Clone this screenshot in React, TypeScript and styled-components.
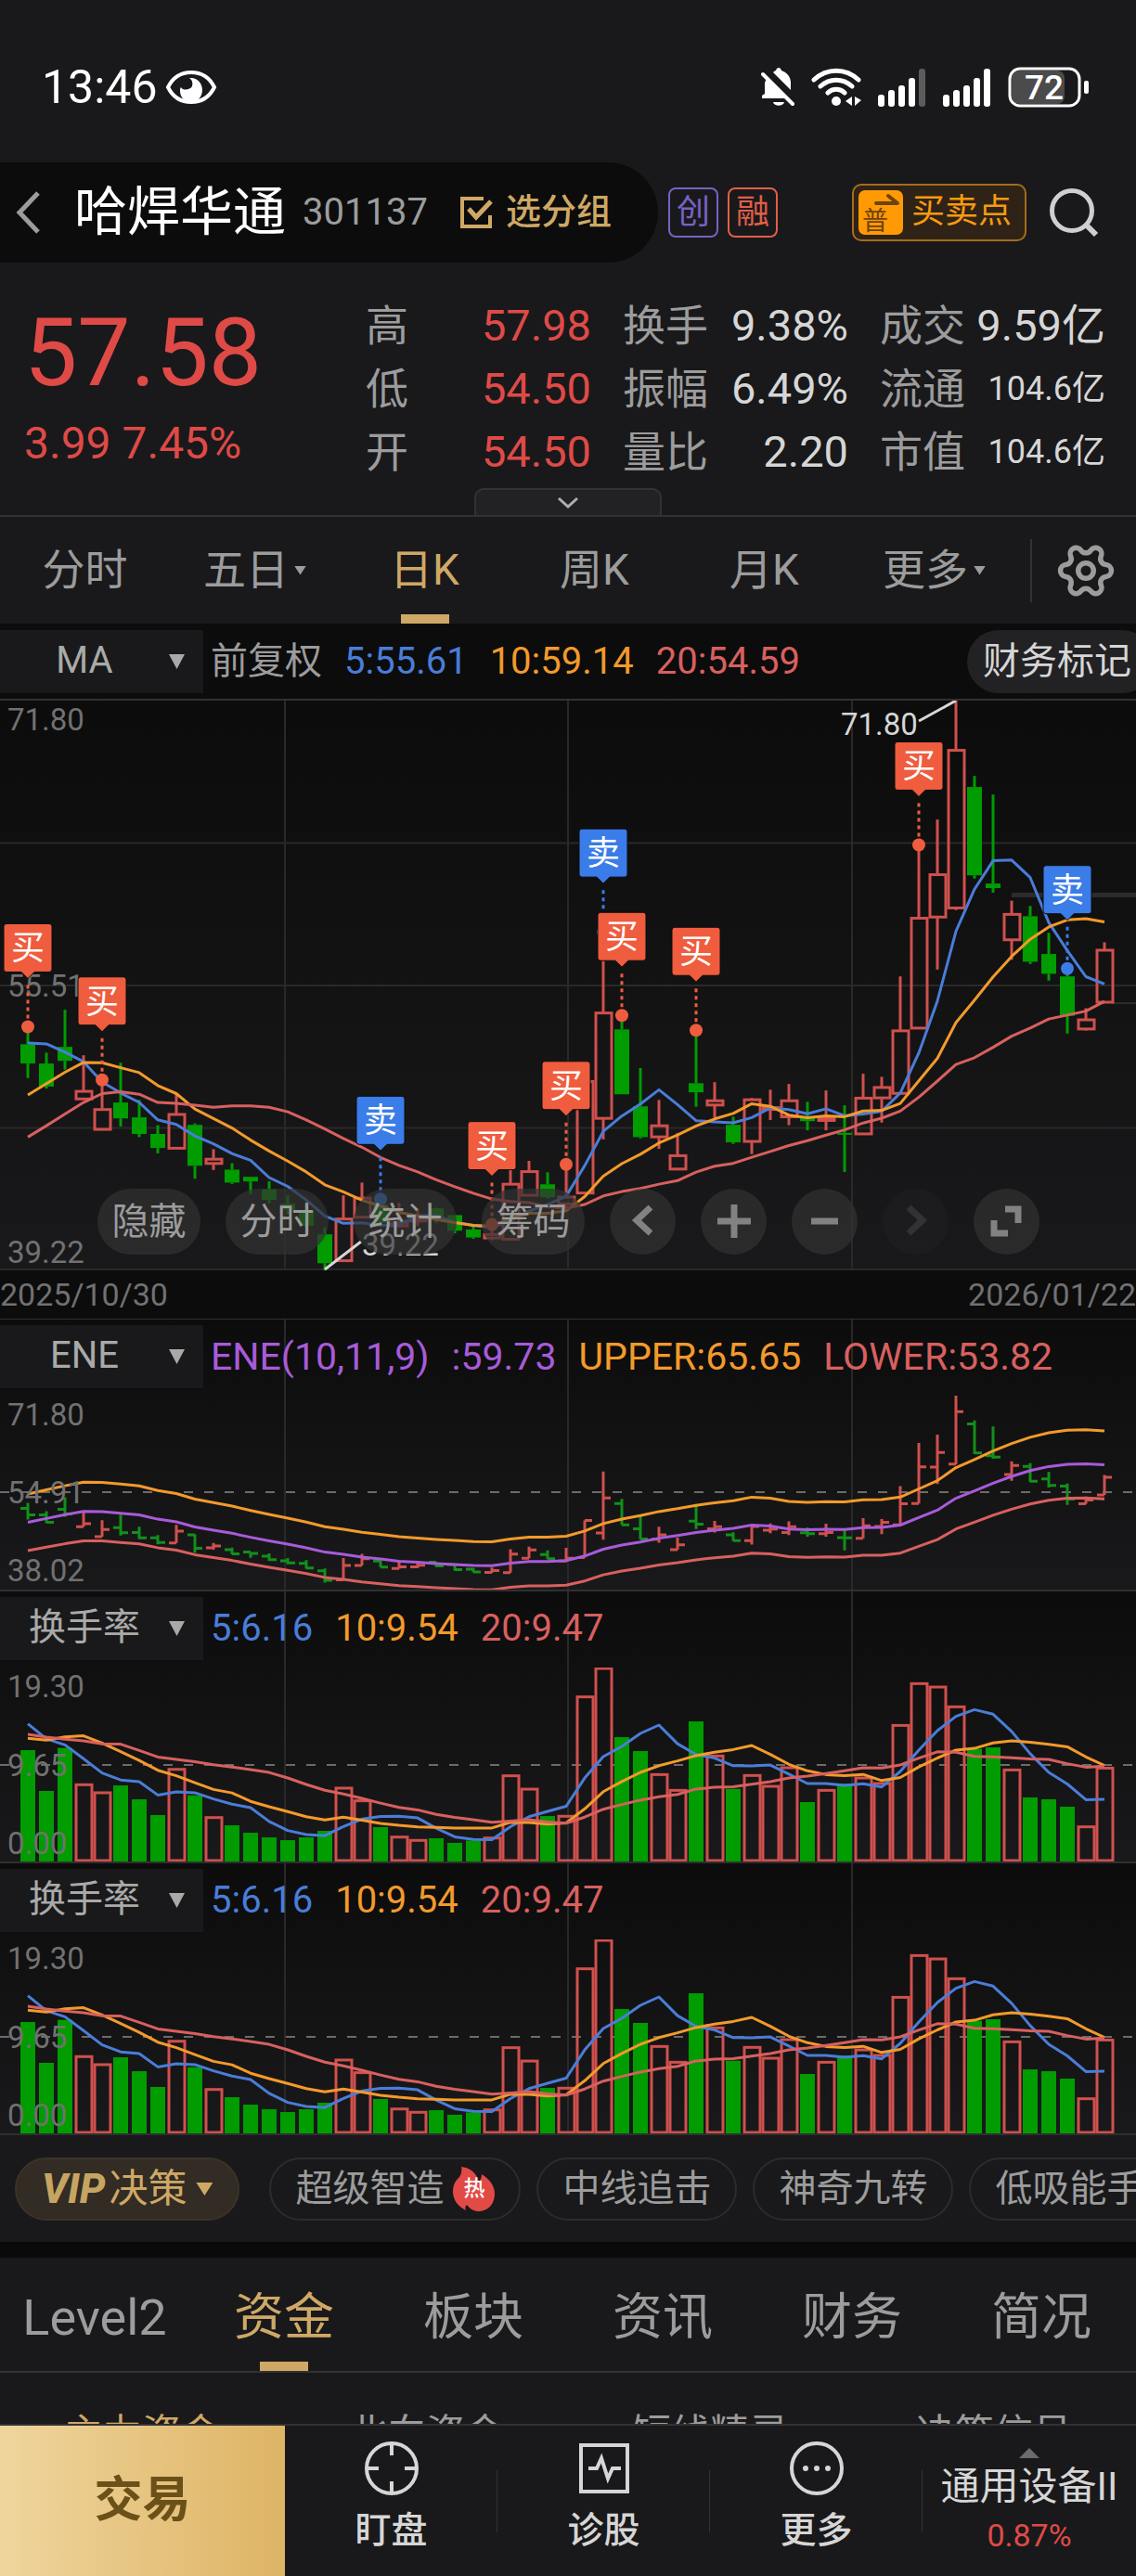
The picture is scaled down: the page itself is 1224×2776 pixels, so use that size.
import React from "react";
import styled, { createGlobalStyle, css } from "styled-components";
import { Settings } from "lucide-react";

const c = {
  page: "#19191b",
  ink: "#0c0c0c",
  line: "#323234",
  grid: "#29292a",
  gold: "#cfa866",
  red: "#df4a47",
  candle: "#d0504d",
  green: "#009c00",
  blue: "#4a7dd8",
  orange: "#f39a2b",
  rose: "#d8605f",
  purple: "#a85bd9",
  grey: "#9c9c9c",
  dim: "#717172",
  light: "#d6d6d6",
  buy: "#ef5c3e",
  sell: "#3a7ce8",
};

const font = `Roboto, "Noto Sans CJK SC", sans-serif`;

const Global = createGlobalStyle`
  * { box-sizing: border-box; }
  body { margin: 0; background: ${c.page}; color: ${c.light}; font-family: ${font}; line-height: 1.2; }
  button, select { font: inherit; color: inherit; background: none; border: 0; padding: 0; margin: 0; }
  dl, dd, h1, p { margin: 0; font-weight: 400; }
  a { color: inherit; text-decoration: none; }
  svg { display: block; flex: none; }
`;

/* ---------- data ---------- */

type Candle = [open: number, close: number, low: number, high: number];

const candles: Candle[] = [
  [52.15, 51.05, 50.22, 53.15], [51.05, 49.73, 49.62, 51.67], [52.0, 51.2, 50.7, 54.12],
  [48.97, 49.51, 48.97, 51.52], [47.23, 48.47, 47.23, 50.11], [48.82, 47.91, 47.45, 51.09],
  [47.97, 47.02, 46.84, 48.97], [47.02, 46.22, 45.91, 47.52], [46.15, 48.19, 46.15, 49.31],
  [47.54, 45.2, 44.46, 47.62], [45.28, 45.63, 44.96, 46.15], [44.98, 44.24, 44.16, 45.35],
  [44.57, 44.31, 43.57, 44.57], [43.85, 43.25, 43.05, 44.31], [43.03, 42.68, 42.42, 43.51],
  [42.6, 41.77, 41.67, 43.14], [41.28, 39.63, 39.22, 41.69], [39.72, 42.21, 39.72, 43.51],
  [42.21, 43.4, 42.21, 44.24], [42.97, 41.95, 41.88, 43.29], [41.71, 41.99, 41.67, 43.07],
  [41.99, 42.25, 41.77, 42.75], [42.77, 42.16, 41.93, 42.81], [42.38, 41.49, 41.34, 42.38],
  [41.56, 41.1, 41.02, 41.77], [41.02, 41.32, 40.93, 41.84], [40.95, 44.2, 40.95, 45.07],
  [43.46, 44.92, 43.46, 45.48], [44.14, 43.4, 43.31, 44.83], [42.97, 43.46, 42.81, 45.28],
  [43.59, 50.07, 43.59, 50.07], [47.86, 53.99, 46.71, 58.58], [53.0, 49.29, 49.29, 53.8],
  [48.6, 46.84, 46.76, 50.79], [46.8, 47.54, 46.17, 48.97], [44.96, 45.83, 44.96, 47.08],
  [49.92, 49.4, 48.58, 52.95], [48.62, 48.97, 47.95, 49.98], [47.54, 46.54, 46.45, 48.01],
  [46.54, 49.03, 45.87, 49.08], [48.38, 48.58, 47.82, 49.55], [47.95, 48.97, 47.52, 49.88],
  [47.93, 47.75, 47.23, 48.86], [47.77, 47.95, 47.23, 49.51], [47.08, 47.04, 44.85, 48.66],
  [46.97, 49.12, 46.97, 50.46], [49.03, 49.73, 47.67, 50.29], [49.29, 52.97, 49.25, 56.03],
  [53.02, 59.41, 53.02, 63.55], [59.37, 61.9, 56.42, 65.0], [59.89, 69.01, 59.82, 71.8],
  [66.86, 61.81, 61.62, 67.49], [61.34, 61.08, 60.82, 66.43], [58.07, 59.63, 56.98, 60.36],
  [59.47, 56.87, 56.74, 60.06], [57.31, 56.18, 55.79, 58.52], [56.03, 53.78, 52.76, 56.48],
  [52.97, 53.6, 52.93, 54.21], [54.5, 57.58, 54.5, 57.98],
];

const turnover = [
  11.08, 7.02, 11.3, 7.73, 6.93, 7.57, 6.19, 4.62, 9.26, 6.59, 4.46, 3.6, 2.86, 2.4, 2.12, 2.4, 3.05,
  7.39, 6.13, 3.42, 2.52, 2.19, 2.31, 1.85, 2.09, 2.43, 8.62, 7.29, 4.52, 4.59, 16.47, 19.3, 12.37,
  10.99, 8.74, 7.17, 13.94, 10.59, 7.23, 8.65, 7.57, 9.42, 5.91, 7.17, 7.73, 8.4, 7.85, 13.63, 17.79,
  17.45, 15.48, 11.2, 11.36, 9.2, 6.37, 6.19, 5.45, 3.54, 9.38,
];

// Averages for the first days, whose window starts before the visible range.
const priceLead = {
  5: [52.22, 52.17, 51.7, 51.15],
  10: [49.25, 49.9, 50.55, 51.11, 51.09, 50.81, 50.53, 49.79, 49.33],
  20: [46.84, 47.49, 48.16, 48.82, 49.33, 49.44, 49.29, 48.82, 48.77, 48.66, 48.55, 48.62, 48.62, 48.55, 48.29, 47.82, 47.3, 46.76, 46.26],
};
const turnoverLead = {
  5: [13.7, 12.2, 11.6, 10.22],
  10: [12.25, 12.07, 12.4, 12.5, 11.79, 10.93, 10.06, 9.08, 8.53],
  20: [12.65, 12.37, 12.16, 12.0, 11.7, 11.67, 11.05, 10.4, 10.16, 9.94, 9.63, 9.39, 9.14, 8.86, 8.31, 7.66, 7.08, 6.71, 6.28],
};

const average = (values: number[], n: number, lead: number[]) =>
  values.map((_, i) =>
    i < n - 1 ? lead[i] : values.slice(i - n + 1, i + 1).reduce((a, b) => a + b, 0) / n
  );

const closes = candles.map((k) => k[1]);
const ma5 = average(closes, 5, priceLead[5]);
const ma10 = average(closes, 10, priceLead[10]);
const ma20 = average(closes, 20, priceLead[20]);
const to5 = average(turnover, 5, turnoverLead[5]);
const to10 = average(turnover, 10, turnoverLead[10]);
const to20 = average(turnover, 20, turnoverLead[20]);

const trades: { day: number; kind: "buy" | "sell" }[] = [
  { day: 0, kind: "buy" }, { day: 4, kind: "buy" }, { day: 19, kind: "sell" },
  { day: 25, kind: "buy" }, { day: 29, kind: "buy" }, { day: 31, kind: "sell" },
  { day: 32, kind: "buy" }, { day: 36, kind: "buy" }, { day: 48, kind: "buy" },
  { day: 56, kind: "sell" },
];

/* ---------- chart parts ---------- */

const W = 1224;
const dayX = (i: number) => 30 + i * 20;
const isUp = (k: Candle) => k[1] >= k[0];

const Plot = styled.svg`
  width: 100%;
  height: auto;
  overflow: hidden;
  font-family: ${font};
`;

function Line({ values, y, color }: { values: number[]; y: (v: number) => number; color: string }) {
  return (
    <polyline
      points={values.map((v, i) => `${dayX(i)},${y(v).toFixed(1)}`).join(" ")}
      fill="none"
      stroke={color}
      strokeWidth={3}
      strokeLinejoin="round"
    />
  );
}

function AxisLabels({ labels, at }: { labels: string[]; at: number[] }) {
  return (
    <g fill={c.dim} fontSize={33}>
      {labels.map((t, i) => (
        <text key={t} x={8} y={at[i] + 11}>{t}</text>
      ))}
    </g>
  );
}

function Trade({ x, y, kind }: { x: number; y: number; kind: "buy" | "sell" }) {
  const color = kind === "buy" ? c.buy : c.sell;
  const top = y - 111;
  return (
    <g>
      <line x1={x} x2={x} y1={top + 66} y2={y - 8} stroke={color} strokeWidth={3} strokeDasharray="4 4" />
      <circle cx={x} cy={y} r={7} fill={color} />
      <path
        d={`M${x - 23} ${top}h46q3 0 3 3v46q0 3 -3 3h-16l-7 7l-7 -7h-16q-3 0 -3 -3v-46q0 -3 3 -3z`}
        fill={color}
        stroke="#0c0c0c"
        strokeWidth={1}
      />
      <text x={x} y={top + 39} fontSize={36} fill="#fff" textAnchor="middle">
        {kind === "buy" ? "买" : "卖"}
      </text>
    </g>
  );
}

function PriceChart() {
  const H = 614;
  const y = (p: number) => ((71.8 - p) / (71.8 - 39.22)) * H;
  return (
    <Plot viewBox={`0 0 ${W} ${H}`} role="img" aria-label="日K线">
      <g stroke={c.grid} strokeWidth={2}>
        {[1, 2, 3].map((n) => (
          <line key={n} x1={0} x2={W} y1={(H / 4) * n} y2={(H / 4) * n} />
        ))}
        <line x1={0} x2={W} y1={H - 1} y2={H - 1} />
      </g>
      <line x1={1090} x2={W} y1={y(60.69)} y2={y(60.69)} stroke="#2b2b2c" strokeWidth={5} />
      <line x1={1198} x2={W} y1={y(54.5)} y2={y(54.5)} stroke="#2b2b2c" strokeWidth={2} />
      {candles.map((k, i) => {
        const [open, close, low, high] = k;
        const x = dayX(i);
        const up = isUp(k);
        const color = up ? c.candle : c.green;
        const top = y(Math.max(open, close));
        const bottom = y(Math.min(open, close));
        return (
          <g key={i} stroke={color}>
            <line x1={x} x2={x} y1={y(high)} y2={top} strokeWidth={3} />
            <line x1={x} x2={x} y1={bottom} y2={y(low)} strokeWidth={3} />
            {up ? (
              <rect x={x - 8} y={top + 1} width={17} height={Math.max(bottom - top - 2, 2)} fill="none" strokeWidth={3} />
            ) : (
              <rect x={x - 8} y={top} width={16} height={Math.max(bottom - top, 2)} fill={color} stroke="none" />
            )}
          </g>
        );
      })}
      <Line values={ma5} y={y} color={c.blue} />
      <Line values={ma10} y={y} color={c.orange} />
      <Line values={ma20} y={y} color={c.rose} />
      <AxisLabels labels={["71.80", "55.51", "39.22"]} at={[21, 308, 595]} />
      {trades.map((t) => (
        <Trade key={t.day} x={dayX(t.day)} y={y(candles[t.day][3])} kind={t.kind} />
      ))}
      <g stroke={c.light} strokeWidth={3}>
        <line x1={990} y1={22} x2={1030} y2={0} />
        <line x1={350} y1={613} x2={389} y2={583} />
      </g>
      <g fill={c.light} fontSize={33}>
        <text x={906} y={37}>71.80</text>
        <text x={390} y={598}>39.22</text>
      </g>
    </Plot>
  );
}

const SUB_H = 209;

function EneChart() {
  const y = (p: number) => ((71.8 - p) / (71.8 - 38.02)) * SUB_H;
  return (
    <Plot viewBox={`0 0 ${W} ${SUB_H}`} role="img" aria-label="ENE">
      <line x1={0} x2={W} y1={104} y2={104} stroke="#6b6b6b" strokeWidth={2} strokeDasharray="10 12" />
      {candles.map((k, i) => {
        const x = dayX(i);
        return (
          <path
            key={i}
            d={`M${x} ${y(k[3])}V${y(k[2])}M${x - 8} ${y(k[0])}H${x}M${x} ${y(k[1])}H${x + 8}`}
            stroke={isUp(k) ? c.candle : "#12901a"}
            strokeWidth={3}
            fill="none"
          />
        );
      })}
      <Line values={ma10.map((v) => v * 1.11)} y={y} color={c.orange} />
      <Line values={ma10.map((v) => v * 1.01)} y={y} color={c.purple} />
      <Line values={ma10.map((v) => v * 0.91)} y={y} color={c.rose} />
      <AxisLabels labels={["71.80", "54.91", "38.02"]} at={[21, 105, 189]} />
    </Plot>
  );
}

function TurnoverChart() {
  const y = (v: number) => SUB_H - (v / 19.3) * SUB_H;
  return (
    <Plot viewBox={`0 0 ${W} ${SUB_H}`} role="img" aria-label="换手率">
      <line x1={0} x2={W} y1={105} y2={105} stroke="#6b6b6b" strokeWidth={2} strokeDasharray="10 12" />
      {turnover.map((v, i) => {
        const x = dayX(i);
        return isUp(candles[i]) ? (
          <rect key={i} x={x - 8} y={y(v) + 1} width={17} height={SUB_H - y(v) - 2} fill="none" stroke={c.candle} strokeWidth={3} />
        ) : (
          <rect key={i} x={x - 8} y={y(v)} width={16} height={SUB_H - y(v)} fill={c.green} />
        );
      })}
      <Line values={to5} y={y} color={c.blue} />
      <Line values={to10} y={y} color={c.orange} />
      <Line values={to20} y={y} color={c.rose} />
      <AxisLabels labels={["19.30", "9.65", "0.00"]} at={[21, 106, 190]} />
    </Plot>
  );
}

/* ---------- layout ---------- */

const Page = styled.div`
  display: flex;
  flex-direction: column;
  height: 100vh;
  overflow: hidden;
  background: ${c.page};
`;

const Scroll = styled.main`
  flex: 1;
  min-height: 0;
  overflow: hidden;
`;

const StatusBar = styled.div`
  display: flex;
  align-items: center;
  height: 175px;
  padding: 12px 50px 0 45px;
  color: #fff;
  font-size: 50px;
  gap: 8px;
`;

const StatusIcons = styled.div`
  display: flex;
  align-items: center;
  gap: 18px;
  margin-left: auto;
`;

const Header = styled.header`
  display: flex;
  align-items: center;
  height: 108px;
  padding-right: 40px;
`;

const TitlePill = styled.div`
  display: flex;
  align-items: center;
  height: 108px;
  padding: 0 50px 0 16px;
  background: ${c.ink};
  border-radius: 0 54px 54px 0;
`;

const StockName = styled.h1`
  margin-left: 36px;
  font-size: 57px;
  color: #fff;
`;

const StockCode = styled.span`
  margin-left: 18px;
  font-size: 40px;
  color: ${c.grey};
`;

const GroupButton = styled.button`
  display: flex;
  align-items: center;
  gap: 14px;
  margin-left: 34px;
  font-size: 38px;
  font-weight: 500;
  color: ${c.gold};
`;

const Tags = styled.div`
  display: flex;
  gap: 10px;
  margin-left: 11px;
`;

const Tag = styled.span<{ $color: string }>`
  display: grid;
  place-items: center;
  width: 54px;
  height: 54px;
  border: 2px solid ${(p) => p.$color};
  border-radius: 8px;
  font-size: 36px;
  line-height: 44px;
  color: ${(p) => p.$color};
`;

const HeaderActions = styled.div`
  display: flex;
  align-items: center;
  gap: 24px;
  margin-left: auto;
`;

const TradePointButton = styled.button`
  display: flex;
  align-items: center;
  gap: 9px;
  height: 62px;
  padding: 0 14px 0 5px;
  border: 2px solid #a56c1c;
  border-radius: 10px;
  background: #2f2317;
  font-size: 36px;
  color: #f79a10;
`;

const IconButton = styled.button`
  display: grid;
  place-items: center;
`;

const Quote = styled.section`
  display: flex;
  padding: 34px 33px 5px 0;
`;

const PriceBlock = styled.div`
  flex: 0 0 394px;
  padding: 11px 0 0 26px;
  color: ${c.red};
`;

const Price = styled.p`
  font-size: 102px;
  line-height: 104px;
`;

const Change = styled.p`
  margin-top: 18px;
  font-size: 48px;
  line-height: 56px;
`;

const Stats = styled.dl`
  flex: 1;
  display: grid;
  grid-template-columns: repeat(3, 1fr);
  column-gap: 34px;
`;

const Stat = styled.div`
  display: flex;
  justify-content: space-between;
  align-items: center;
  height: 68px;
  font-size: 46px;
  line-height: 68px;
`;

const StatLabel = styled.dt`
  color: ${c.grey};
`;

const StatValue = styled.dd<{ $up?: boolean; $small?: boolean }>`
  color: ${(p) => (p.$up ? c.red : c.light)};
  font-size: ${(p) => (p.$small ? 36 : 47)}px;
  white-space: nowrap;
`;

const HandleRow = styled.div`
  display: flex;
  justify-content: center;
  border-bottom: 2px solid ${c.line};
`;

const Handle = styled.button`
  display: grid;
  place-items: center;
  width: 202px;
  height: 29px;
  border: 2px solid ${c.line};
  border-bottom: 0;
  border-radius: 10px 10px 0 0;
  background: #222224;
`;

const PeriodBar = styled.nav`
  display: flex;
  align-items: center;
  height: 115px;
`;

const PeriodTabs = styled.div`
  flex: 1;
  display: grid;
  grid-template-columns: repeat(6, 1fr);
  align-self: stretch;
  padding-right: 12px;
`;

const tab = css<{ $active?: boolean }>`
  position: relative;
  display: flex;
  align-items: center;
  justify-content: center;
  gap: 6px;
  white-space: nowrap;
  color: ${(p) => (p.$active ? c.gold : c.grey)};
  &::after {
    content: "";
    position: absolute;
    bottom: 0;
    left: 50%;
    width: 52px;
    height: 10px;
    margin-left: -26px;
    background: ${(p) => (p.$active ? c.gold : "none")};
  }
`;

const PeriodTab = styled.button<{ $active?: boolean }>`
  ${tab}
  font-size: 46px;
`;

const GearButton = styled.button`
  display: grid;
  place-items: center;
  width: 114px;
  height: 68px;
  padding-left: 4px;
  border-left: 2px solid ${c.line};
  color: ${c.grey};
`;

const Gear = styled(Settings)`
  transform: rotate(90deg);
`;

const Caret = styled.span<{ $w: number; $h: number; $up?: boolean }>`
  width: ${(p) => p.$w}px;
  height: ${(p) => p.$h}px;
  background: currentColor;
  clip-path: ${(p) => (p.$up ? "polygon(50% 0, 100% 100%, 0 100%)" : "polygon(0 0, 100% 0, 50% 100%)")};
`;

const IndicatorBar = styled.div`
  display: flex;
  align-items: center;
  padding: 6px 0 8px;
  font-size: 40px;
  white-space: nowrap;
`;

const MainIndicatorBar = styled(IndicatorBar)`
  padding: 7px 0 6px;
  background: ${c.ink};
  border-bottom: 2px solid ${c.line};
  overflow: hidden;
`;

const Picker = styled.label`
  display: grid;
  align-items: center;
  flex: none;
  width: 219px;
  height: 68px;
  background: ${c.page};
  color: #a8aaa8;
  > * { grid-area: 1 / 1; }
  > span { justify-self: end; margin-right: 20px; pointer-events: none; }
`;

const PickerSelect = styled.select`
  appearance: none;
  width: 100%;
  height: 66px;
  align-self: start;
  padding-right: 37px;
  text-align: center;
  text-align-last: center;
  outline: 0;
`;

const Readings = styled.div<{ $size?: number }>`
  display: flex;
  align-items: baseline;
  gap: 24px;
  margin-left: 8px;
  font-size: ${(p) => p.$size ?? 40}px;
  line-height: 48px;
`;

const Reading = styled.span<{ $color: string }>`
  color: ${(p) => p.$color};
`;

const MarkButton = styled.button`
  flex: none;
  height: 68px;
  margin-left: auto;
  margin-right: -19px;
  padding: 0 24px 0 17px;
  border-radius: 34px;
  background: #222224;
  color: ${c.light};
`;

const gridded = css`
  background:
    linear-gradient(${c.grid}, ${c.grid}) 25% 0 / 2px 100% no-repeat,
    linear-gradient(${c.grid}, ${c.grid}) 50% 0 / 2px 100% no-repeat,
    linear-gradient(${c.grid}, ${c.grid}) 75% 0 / 2px 100% no-repeat,
    linear-gradient(${c.ink}, ${c.page});
`;

const PricePanel = styled.section`
  position: relative;
  ${gridded}
`;

const SubPanel = styled.section`
  border-bottom: 2px solid #2f2f30;
  ${gridded}
`;

const ChartTools = styled.div`
  position: absolute;
  left: 105px;
  bottom: 17px;
  display: flex;
  gap: 27px;
`;

const ToolButton = styled.button<{ $round?: boolean }>`
  display: grid;
  place-items: center;
  width: ${(p) => (p.$round ? 71 : 111)}px;
  height: 71px;
  border-radius: 36px;
  background: rgba(50, 50, 50, 0.7);
  font-size: 40px;
  color: ${c.grey};
  white-space: nowrap;
  &:disabled { opacity: 0.25; }
`;

const DateRow = styled.div`
  display: flex;
  justify-content: space-between;
  align-items: center;
  height: 53px;
  border-bottom: 1px solid ${c.line};
  background: ${c.ink};
  font-size: 34px;
  color: ${c.dim};
`;

const ChipRow = styled.div`
  display: flex;
  gap: 17px;
  padding: 24px 0 23px 16px;
  overflow: hidden;
`;

const Chip = styled.button`
  flex: none;
  display: flex;
  align-items: center;
  gap: 10px;
  height: 68px;
  padding: 0 26px;
  border: 2px solid #2c2c2e;
  border-radius: 34px;
  font-size: 40px;
  color: ${c.grey};
  white-space: nowrap;
`;

const VipChip = styled(Chip)`
  gap: 4px;
  margin-right: 15px;
  padding: 0 27px;
  font-size: 42px;
  background: #322c24;
  border-color: #3b3327;
  color: ${c.gold};
  > span { margin-left: 6px; }
`;

const VipMark = styled.b`
  font-size: 44px;
  font-weight: 800;
  font-style: italic;
  color: #c6a563;
`;

const Divider = styled.div`
  height: 17px;
  background: #0a0a0a;
`;

const SectionTabs = styled.nav`
  display: grid;
  grid-template-columns: repeat(6, 1fr);
  height: 124px;
  border-bottom: 2px solid ${c.line};
`;

const SectionTab = styled.a<{ $active?: boolean }>`
  ${tab}
  font-size: 54px;
  padding-top: 8px;
`;

const SubTabs = styled.nav`
  display: grid;
  grid-template-columns: repeat(4, 1fr);
  text-align: center;
  font-size: 42px;
  line-height: 132px;
`;

const SubTab = styled.a<{ $active?: boolean }>`
  color: ${(p) => (p.$active ? c.gold : c.grey)};
`;

const BottomBar = styled.nav`
  flex: none;
  display: grid;
  grid-template-columns: 307fr 229fr 229fr 229fr 230fr;
  height: 164px;
  border-top: 2px solid ${c.line};
  background: ${c.page};
`;

const TradeButton = styled.button`
  background: linear-gradient(90deg, #efd59d, #deb465);
  color: #6b5019;
  font-size: 52px;
  font-weight: 700;
`;

const divided = css`
  background: linear-gradient(${c.line}, ${c.line}) right 48px / 1px 67px no-repeat;
`;

const BottomItem = styled.button`
  display: flex;
  flex-direction: column;
  align-items: center;
  gap: 10px;
  padding-top: 16px;
  font-size: 39px;
  line-height: 54px;
  font-weight: 500;
  ${divided}
`;

const SectorItem = styled.button`
  display: flex;
  flex-direction: column;
  align-items: center;
  padding-top: 24px;
  font-size: 42px;
  line-height: 62px;
  white-space: nowrap;
  > span { color: #6b6b6b; }
`;

const SectorChange = styled.small`
  font-size: 34px;
  line-height: 42px;
  color: ${c.red};
`;

const FlameBadge = styled.span`
  display: grid;
  place-items: center;
  > * { grid-area: 1 / 1; }
`;

const FlameText = styled.b`
  position: relative;
  font-size: 23px;
  line-height: 24px;
  font-weight: 500;
  color: #fff;
`;

/* ---------- icons ---------- */

const EyeIcon = () => (
  <svg width="56" height="38" viewBox="0 0 56 38" fill="none">
    <path d="M3 19C8 9 17 3 28 3s20 6 25 16C48 29 39 35 28 35S8 29 3 19z" stroke="#fff" strokeWidth="4" />
    <path d="M26 9c8-1 14 5 14 13 0 7-5 13-12 13s-12-5-12-12c0-2 0-3 1-4 2 4 10 3 12-1 1-4 0-7-3-9z" fill="#fff" />
  </svg>
);

const MutedBell = () => (
  <svg width="36" height="42" viewBox="0 0 36 42">
    <path d="M6 12L27 33H1v-3l3-2V17c0-2 1-3 2-5zM13 5c1-1 2-2 3-2 1-4 5-4 6 0 6 2 10 7 10 13v8z" fill="#fff" />
    <path d="M13 37h12c-1 5-11 5-12 0z" fill="#fff" />
    <path d="M2 7l32 32" stroke="#fff" strokeWidth="4" strokeLinecap="round" />
  </svg>
);

const WifiIcon = () => (
  <svg width="54" height="42" viewBox="0 0 54 42" fill="none" stroke="#fff" strokeWidth="5" strokeLinecap="round">
    <path d="M3 13c14-13 34-13 48 0M10 20c10-9 24-9 34 0M18 27c5-5 13-5 18 0" />
    <circle cx="27" cy="36" r="5" fill="#fff" stroke="none" />
    <path d="M44 31v10l-7-5zM47 31v10l7-6z" fill="#fff" stroke="none" />
  </svg>
);

const SignalIcon = ({ bars }: { bars: number }) => (
  <svg width="52" height="42" viewBox="0 0 52 42">
    {[13, 18, 23, 31, 41].map((h, i) => (
      <rect key={i} x={i * 11} y={42 - h} width="7" height={h} rx="3" fill={i < bars ? "#fff" : "#5c5c5d"} />
    ))}
  </svg>
);

const Battery = () => (
  <svg width="88" height="44" viewBox="0 0 88 44" fontFamily="Roboto">
    <rect x="4" y="4" width="57" height="36" rx="8" fill="#4b4b4c" />
    <rect x="2" y="2" width="75" height="40" rx="11" fill="none" stroke="#fff" strokeWidth="3" />
    <rect x="82" y="15" width="5" height="14" rx="2" fill="#fff" />
    <text x="39" y="35" fontSize="37" fontWeight="500" fill="#fff" textAnchor="middle">72</text>
  </svg>
);

const ChevronLeft = () => (
  <svg width="28" height="48" viewBox="0 0 28 48" fill="none" stroke={c.grey} strokeWidth="5">
    <path d="M25 3L5 24l20 21" />
  </svg>
);

const CheckBoxIcon = () => (
  <svg width="36" height="36" viewBox="0 0 36 36" fill="none" stroke={c.gold} strokeWidth="4">
    <path d="M26 3H3v30h30V21" />
    <path d="M10 14l8 9L34 6" strokeWidth="5" />
  </svg>
);

const AccountIcon = () => (
  <svg width="48" height="48" viewBox="0 0 48 48" fontFamily="Noto Sans CJK SC">
    <rect width="48" height="48" rx="7" fill="#ff9a05" />
    <path d="M19 14h23L32 6" fill="none" stroke="#6e420b" strokeWidth="4" strokeLinecap="round" strokeLinejoin="round" />
    <text x="4" y="43" fontSize="28" fill="#6e420b">普</text>
  </svg>
);

const SearchIcon = () => (
  <svg width="54" height="54" viewBox="0 0 54 54" fill="none" stroke="#cfcfcf" strokeWidth="5">
    <circle cx="25" cy="25" r="21.5" />
    <path d="M39 39l12 12" strokeWidth="6" />
  </svg>
);

const ChevronDown = () => (
  <svg width="24" height="14" viewBox="0 0 24 14" fill="none" stroke="#b0b0b0" strokeWidth="3">
    <path d="M2 2l10 9L22 2" />
  </svg>
);

const toolPaths: Record<string, string> = {
  prev: "M44 20L29 34l15 14",
  plus: "M36 17v36M18 35h36",
  minus: "M21 35h29",
  next: "M28 20l15 14-15 14",
  expand: "M34 22h14v15M22 34v14h15",
};

const ToolIcon = ({ name }: { name: string }) => (
  <svg width="71" height="71" viewBox="0 0 71 71" fill="none" stroke="#828282" strokeWidth="7">
    <path d={toolPaths[name]} />
  </svg>
);

const Flame = () => (
  <svg width="45" height="48" viewBox="0 0 45 48">
    <path
      d="M9 0c9 1 16 6 19 16 2-2 3-5 3-8 8 5 14 12 14 21 0 10-6 18-16 19-7 0-11-3-14-7-2 2-2 4-1 6C6 43 0 36 0 27 0 19 3 15 7 11c2-3 3-7 2-11z"
      fill="#e24a46"
    />
  </svg>
);

const WatchIcon = () => (
  <svg width="60" height="60" viewBox="0 0 60 60" fill="none" stroke={c.light} strokeWidth="4">
    <circle cx="30" cy="30" r="27" />
    <path d="M30 3v13M30 44v13M3 30h13M44 30h13" />
  </svg>
);

const DiagnoseIcon = () => (
  <svg width="60" height="60" viewBox="0 0 60 60" fill="none" stroke={c.light} strokeWidth="4">
    <rect x="5" y="5" width="50" height="50" />
    <path d="M13 30h9l5-11 7 22 5-11h9" />
  </svg>
);

const MoreIcon = () => (
  <svg width="60" height="60" viewBox="0 0 60 60" fill="none" stroke={c.light} strokeWidth="4">
    <circle cx="30" cy="30" r="27" />
    <g fill={c.light} stroke="none">
      <circle cx="18" cy="30" r="3" />
      <circle cx="30" cy="30" r="3" />
      <circle cx="42" cy="30" r="3" />
    </g>
  </svg>
);

/* ---------- page ---------- */

const stats: { label: string; value: string; up?: boolean; small?: boolean }[] = [
  { label: "高", value: "57.98", up: true }, { label: "换手", value: "9.38%" }, { label: "成交", value: "9.59亿" },
  { label: "低", value: "54.50", up: true }, { label: "振幅", value: "6.49%" }, { label: "流通", value: "104.6亿", small: true },
  { label: "开", value: "54.50", up: true }, { label: "量比", value: "2.20" }, { label: "市值", value: "104.6亿", small: true },
];

const periods = [
  { label: "分时" }, { label: "五日", menu: true }, { label: "日K", active: true },
  { label: "周K" }, { label: "月K" }, { label: "更多", menu: true },
];

function IndicatorPicker({ value, name }: { value: string; name: string }) {
  return (
    <Picker>
      <PickerSelect aria-label={name} defaultValue={value}>
        <option value={value}>{value}</option>
      </PickerSelect>
      <Caret $w={17} $h={16} />
    </Picker>
  );
}

const turnoverReadings: [string, string][] = [
  ["5:6.16", c.blue], ["10:9.54", c.orange], ["20:9.47", c.rose],
];

function ReadingList({ items, size }: { items: [string, string][]; size?: number }) {
  return (
    <Readings $size={size}>
      {items.map(([text, color]) => (
        <Reading key={text} $color={color}>{text}</Reading>
      ))}
    </Readings>
  );
}

export default function App() {
  return (
    <Page>
      <Global />
      <StatusBar>
        <span>13:46</span>
        <EyeIcon />
        <StatusIcons>
          <MutedBell />
          <WifiIcon />
          <SignalIcon bars={4} />
          <SignalIcon bars={5} />
          <Battery />
        </StatusIcons>
      </StatusBar>
      <Header>
        <TitlePill>
          <IconButton aria-label="返回"><ChevronLeft /></IconButton>
          <StockName>哈焊华通</StockName>
          <StockCode>301137</StockCode>
          <GroupButton><CheckBoxIcon />选分组</GroupButton>
        </TitlePill>
        <Tags>
          <Tag $color="#7762c4">创</Tag>
          <Tag $color="#e25f48">融</Tag>
        </Tags>
        <HeaderActions>
          <TradePointButton><AccountIcon />买卖点</TradePointButton>
          <IconButton aria-label="搜索"><SearchIcon /></IconButton>
        </HeaderActions>
      </Header>
      <Scroll>
        <Quote>
          <PriceBlock>
            <Price>57.58</Price>
            <Change>3.99 7.45%</Change>
          </PriceBlock>
          <Stats>
            {stats.map((s) => (
              <Stat key={s.label}>
                <StatLabel>{s.label}</StatLabel>
                <StatValue $up={s.up} $small={s.small}>{s.value}</StatValue>
              </Stat>
            ))}
          </Stats>
        </Quote>
        <HandleRow>
          <Handle aria-label="展开"><ChevronDown /></Handle>
        </HandleRow>
        <PeriodBar>
          <PeriodTabs>
            {periods.map((p) => (
              <PeriodTab key={p.label} $active={p.active}>
                {p.label}
                {p.menu && <Caret $w={13} $h={10} />}
              </PeriodTab>
            ))}
          </PeriodTabs>
          <GearButton aria-label="设置"><Gear size={66} strokeWidth={2} /></GearButton>
        </PeriodBar>

        <MainIndicatorBar>
          <IndicatorPicker value="MA" name="主图指标" />
          <ReadingList items={[["前复权", c.grey], ["5:55.61", c.blue], ["10:59.14", c.orange], ["20:54.59", c.rose]]} />
          <MarkButton>财务标记</MarkButton>
        </MainIndicatorBar>
        <PricePanel>
          <PriceChart />
          <ChartTools>
            <ToolButton>隐藏</ToolButton>
            <ToolButton>分时</ToolButton>
            <ToolButton>统计</ToolButton>
            <ToolButton>筹码</ToolButton>
            <ToolButton $round aria-label="向前"><ToolIcon name="prev" /></ToolButton>
            <ToolButton $round aria-label="放大"><ToolIcon name="plus" /></ToolButton>
            <ToolButton $round aria-label="缩小"><ToolIcon name="minus" /></ToolButton>
            <ToolButton $round aria-label="向后" disabled><ToolIcon name="next" /></ToolButton>
            <ToolButton $round aria-label="全屏"><ToolIcon name="expand" /></ToolButton>
          </ChartTools>
        </PricePanel>
        <DateRow>
          <span>2025/10/30</span>
          <span>2026/01/22</span>
        </DateRow>

        <SubPanel>
          <IndicatorBar>
            <IndicatorPicker value="ENE" name="副图指标一" />
            <ReadingList size={41} items={[["ENE(10,11,9)", c.purple], [":59.73", c.purple], ["UPPER:65.65", c.orange], ["LOWER:53.82", c.rose]]} />
          </IndicatorBar>
          <EneChart />
        </SubPanel>
        <SubPanel>
          <IndicatorBar>
            <IndicatorPicker value="换手率" name="副图指标二" />
            <ReadingList items={turnoverReadings} />
          </IndicatorBar>
          <TurnoverChart />
        </SubPanel>
        <SubPanel>
          <IndicatorBar>
            <IndicatorPicker value="换手率" name="副图指标三" />
            <ReadingList items={turnoverReadings} />
          </IndicatorBar>
          <TurnoverChart />
        </SubPanel>

        <ChipRow>
          <VipChip><VipMark>VIP</VipMark>决策<Caret $w={18} $h={14} /></VipChip>
          <Chip>超级智造<FlameBadge><Flame /><FlameText>热</FlameText></FlameBadge></Chip>
          <Chip>中线追击</Chip>
          <Chip>神奇九转</Chip>
          <Chip>低吸能手</Chip>
        </ChipRow>
        <Divider />
        <SectionTabs>
          {["Level2", "资金", "板块", "资讯", "财务", "简况"].map((t) => (
            <SectionTab key={t} href="#" $active={t === "资金"}>{t}</SectionTab>
          ))}
        </SectionTabs>
        <SubTabs>
          {["主力资金", "北向资金", "短线精灵", "决策信号"].map((t, i) => (
            <SubTab key={t} href="#" $active={i === 0}>{t}</SubTab>
          ))}
        </SubTabs>
      </Scroll>
      <BottomBar>
        <TradeButton>交易</TradeButton>
        <BottomItem><WatchIcon />盯盘</BottomItem>
        <BottomItem><DiagnoseIcon />诊股</BottomItem>
        <BottomItem><MoreIcon />更多</BottomItem>
        <SectorItem>
          <Caret $w={22} $h={11} $up />
          通用设备II
          <SectorChange>0.87%</SectorChange>
        </SectorItem>
      </BottomBar>
    </Page>
  );
}
